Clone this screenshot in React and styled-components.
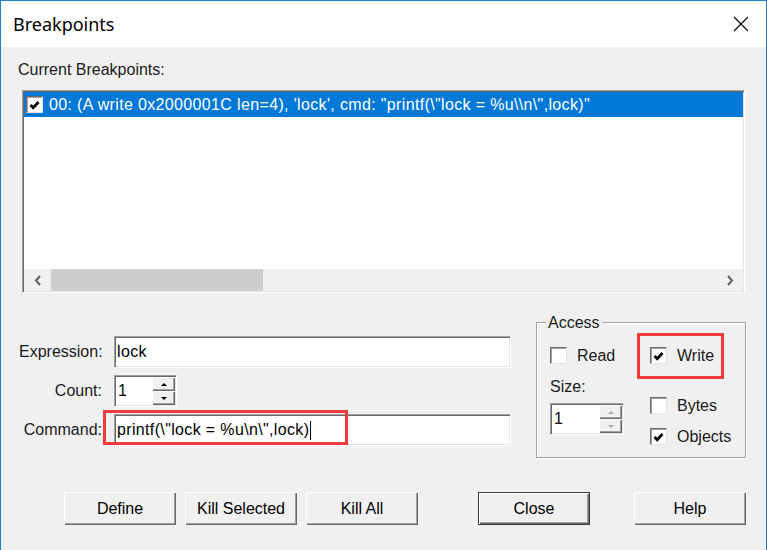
import styled, { createGlobalStyle } from "styled-components";

const GlobalStyle = createGlobalStyle`
  html, body { margin: 0; padding: 0; background: #f0f0f0; }
  body { font-family: "Liberation Sans", Arial, sans-serif; font-size: 16px; color: #000; }
  * { box-sizing: border-box; }
`;

const entry = `00: (A write 0x2000001C len=4), 'lock', cmd: "printf(\\"lock = %u\\\\n\\",lock)"`;
const command = `printf(\\"lock = %u\\n\\",lock)`;

function Tick() {
  return (
    <svg width="11" height="10" viewBox="0 0 11 10">
      <polyline points="1.5,5 4.2,7.8 9.5,2" fill="none" stroke="#000" strokeWidth="2.8" />
    </svg>
  );
}

function CheckBox({ checked }) {
  return <Box>{checked && <Tick />}</Box>;
}

function Chevron({ dir }) {
  const d = dir === "left" ? "M6 1 L2 5.5 L6 10" : "M2 1 L6 5.5 L2 10";
  return (
    <svg width="8" height="11" viewBox="0 0 8 11">
      <path d={d} fill="none" stroke="#606060" strokeWidth="2" />
    </svg>
  );
}

function Spinner({ value, width, disabled }) {
  return (
    <SpinFrame $width={width}>
      <SpinText>{value}</SpinText>
      <SpinButtons>
        <SpinButton $up $disabled={disabled} />
        <SpinButton $disabled={disabled} />
      </SpinButtons>
    </SpinFrame>
  );
}

export default function App() {
  return (
    <>
      <GlobalStyle />
      <Window>
        <TitleBar>
          <Title>Breakpoints</Title>
          <svg width="16" height="16" viewBox="0 0 16 16">
            <path d="M1 1 L15 15 M15 1 L1 15" stroke="#000" strokeWidth="1.1" />
          </svg>
        </TitleBar>

        <Body>
          <Caption>Current Breakpoints:</Caption>
          <ListBox>
            <Items>
              <Item>
                <CheckBox checked />
                <ItemText>{entry}</ItemText>
              </Item>
            </Items>
            <HScroll>
              <ScrollArrow><Chevron dir="left" /></ScrollArrow>
              <Track><Thumb /></Track>
              <ScrollArrow><Chevron dir="right" /></ScrollArrow>
            </HScroll>
          </ListBox>

          <LowerRow>
            <Form>
              <Label>Expression:</Label>
              <TextBox>lock</TextBox>
              <Label>Count:</Label>
              <Spinner value="1" width={63} />
              <Label>Command:</Label>
              <Anchor>
                <TextBox>
                  {command}
                  <Caret />
                </TextBox>
                <Highlight $left={-11} $top={-4} $w={245} $h={35} />
              </Anchor>
            </Form>

            <Group>
              <Legend>Access</Legend>
              <AccessGrid>
                <Column>
                  <CheckRow>
                    <CheckBox />
                    <CheckLabel>Read</CheckLabel>
                  </CheckRow>
                  <SizeLabel>Size:</SizeLabel>
                  <Spinner value="1" width={74} disabled />
                </Column>
                <Column>
                  <CheckRow>
                    <CheckBox checked />
                    <CheckLabel>Write</CheckLabel>
                    <Highlight $left={-13} $top={-14} $w={87} $h={46} />
                  </CheckRow>
                  <CheckRow $mt={33}>
                    <CheckBox />
                    <CheckLabel>Bytes</CheckLabel>
                  </CheckRow>
                  <CheckRow $mt={14}>
                    <CheckBox checked />
                    <CheckLabel>Objects</CheckLabel>
                  </CheckRow>
                </Column>
              </AccessGrid>
            </Group>
          </LowerRow>

          <ButtonRow>
            <Button>Define</Button>
            <Button $ml={9}>Kill Selected</Button>
            <Button $ml={9}>Kill All</Button>
            <Button $ml={60} $default>Close</Button>
            <Button $ml={44}>Help</Button>
          </ButtonRow>
        </Body>
      </Window>
    </>
  );
}

const Window = styled.div`
  width: 767px;
  height: 550px;
  display: flex;
  flex-direction: column;
  border: 1px solid #1883d7;
  border-bottom: none;
  background: #f0f0f0;
  overflow: hidden;
`;

const TitleBar = styled.div`
  height: 46px;
  flex-shrink: 0;
  display: flex;
  align-items: center;
  justify-content: space-between;
  padding: 0 17px 0 12px;
  background: #fff;
`;

const Title = styled.span`
  font-family: "Noto Sans", "Open Sans", sans-serif;
  font-size: 18px;
  color: #000;
`;

const Body = styled.div`
  flex: 1;
  display: flex;
  flex-direction: column;
  padding: 0 20px 0 17px;
`;

const Caption = styled.div`
  margin-top: 14px;
  line-height: 18px;
  color: #1a1a1a;
`;

const sunken = `
  border: 1px solid;
  border-color: #a0a0a0 #fff #fff #a0a0a0;
  box-shadow: inset 1px 1px #696969, inset -1px -1px #e3e3e3;
  background: #fff;
`;

const ListBox = styled.div`
  ${sunken}
  margin: 11px 0 0 4px;
  width: 723px;
  height: 203px;
  padding: 1px;
  display: flex;
  flex-direction: column;
`;

const Items = styled.div`
  flex: 1;
  background: #fff;
`;

const Item = styled.div`
  height: 25px;
  display: flex;
  align-items: center;
  gap: 6px;
  padding-left: 2px;
  background: #0078d7;
  color: #fff;
`;

const ItemText = styled.span`
  white-space: pre;
  letter-spacing: 0.35px;
`;

const HScroll = styled.div`
  height: 22px;
  display: flex;
  background: #f0f0f0;
`;

const ScrollArrow = styled.div`
  width: 27px;
  display: flex;
  align-items: center;
  justify-content: center;
`;

const Track = styled.div`
  flex: 1;
  display: flex;
`;

const Thumb = styled.div`
  width: 212px;
  background: #cdcdcd;
`;

const LowerRow = styled.div`
  margin-top: 21px;
  display: flex;
  align-items: flex-start;
  justify-content: space-between;
  padding-left: 1px;
`;

const Form = styled.div`
  margin-top: 22px;
  display: grid;
  grid-template-columns: 83px 397px;
  grid-auto-rows: 32px;
  column-gap: 12px;
  row-gap: 7px;
`;

const Label = styled.div`
  align-self: center;
  text-align: right;
  color: #1a1a1a;
`;

const TextBox = styled.div`
  ${sunken}
  height: 32px;
  display: flex;
  align-items: center;
  padding-left: 2px;
  white-space: pre;
  letter-spacing: 0.35px;
`;

const Caret = styled.span`
  width: 1px;
  height: 19px;
  background: #000;
  margin-left: 1px;
`;

const Anchor = styled.div`
  position: relative;
`;

const Highlight = styled.div`
  position: absolute;
  left: ${p => p.$left}px;
  top: ${p => p.$top}px;
  width: ${p => p.$w}px;
  height: ${p => p.$h}px;
  border: 3px solid #ef3b3b;
  pointer-events: none;
`;

const SpinFrame = styled.div`
  ${sunken}
  width: ${p => p.$width}px;
  height: 32px;
  display: flex;
  padding: 1px;
`;

const SpinText = styled.div`
  flex: 1;
  padding-left: 2px;
  display: flex;
  align-items: center;
`;

const SpinButtons = styled.div`
  width: 23px;
  display: flex;
  flex-direction: column;
`;

const SpinButton = styled.div`
  flex: 1;
  background: #f0f0f0;
  box-shadow: inset 1px 1px #fff, inset -1px -1px #696969, inset -2px -2px #a0a0a0;
  display: flex;
  align-items: center;
  justify-content: center;

  &::after {
    content: "";
    border-left: 3px solid transparent;
    border-right: 3px solid transparent;
    ${p => (p.$up ? "border-bottom" : "border-top")}: 3px solid ${p => (p.$disabled ? "#a8a8a8" : "#000")};
  }
`;

const Group = styled.fieldset`
  margin: 0;
  width: 210px;
  height: 144px;
  padding: 16px 10px 0 13px;
  border: 1px solid #a0a0a0;
  box-shadow: inset 1px 1px #fff, 1px 1px #fff;
`;

const Legend = styled.legend`
  padding: 0 2px;
  margin-left: -4px;
  line-height: 17px;
  color: #1a1a1a;
`;

const AccessGrid = styled.div`
  display: grid;
  grid-template-columns: 100px auto;
`;

const Column = styled.div`
  display: flex;
  flex-direction: column;
  align-items: flex-start;
`;

const CheckRow = styled.div`
  position: relative;
  height: 17px;
  margin-top: ${p => p.$mt || 0}px;
  display: flex;
  align-items: center;
  gap: 10px;
`;

const Box = styled.div`
  width: 17px;
  height: 17px;
  flex-shrink: 0;
  border: 1px solid;
  border-color: #6d6d6d #e3e3e3 #e3e3e3 #6d6d6d;
  box-shadow: inset 1px 1px #a0a0a0;
  background: #fff;
  display: flex;
  align-items: center;
  justify-content: center;
`;

const CheckLabel = styled.span`
  color: #1a1a1a;
`;

const SizeLabel = styled.div`
  margin: 14px 0 8px;
  line-height: 17px;
  color: #1a1a1a;
`;

const ButtonRow = styled.div`
  margin-top: 34px;
  padding-left: 46px;
  display: flex;
`;

const Button = styled.div`
  width: 112px;
  height: 33px;
  margin-left: ${p => p.$ml || 0}px;
  display: flex;
  align-items: center;
  justify-content: center;
  background: #f0f0f0;
  color: #000;
  box-shadow: ${p =>
    p.$default
      ? "inset 0 0 0 1px #3c3c3c, inset 2px 2px #fff, inset -2px -2px #696969, inset -3px -3px #a0a0a0"
      : "inset 1px 1px #fff, inset -1px -1px #696969, inset -2px -2px #a0a0a0"};
`;
